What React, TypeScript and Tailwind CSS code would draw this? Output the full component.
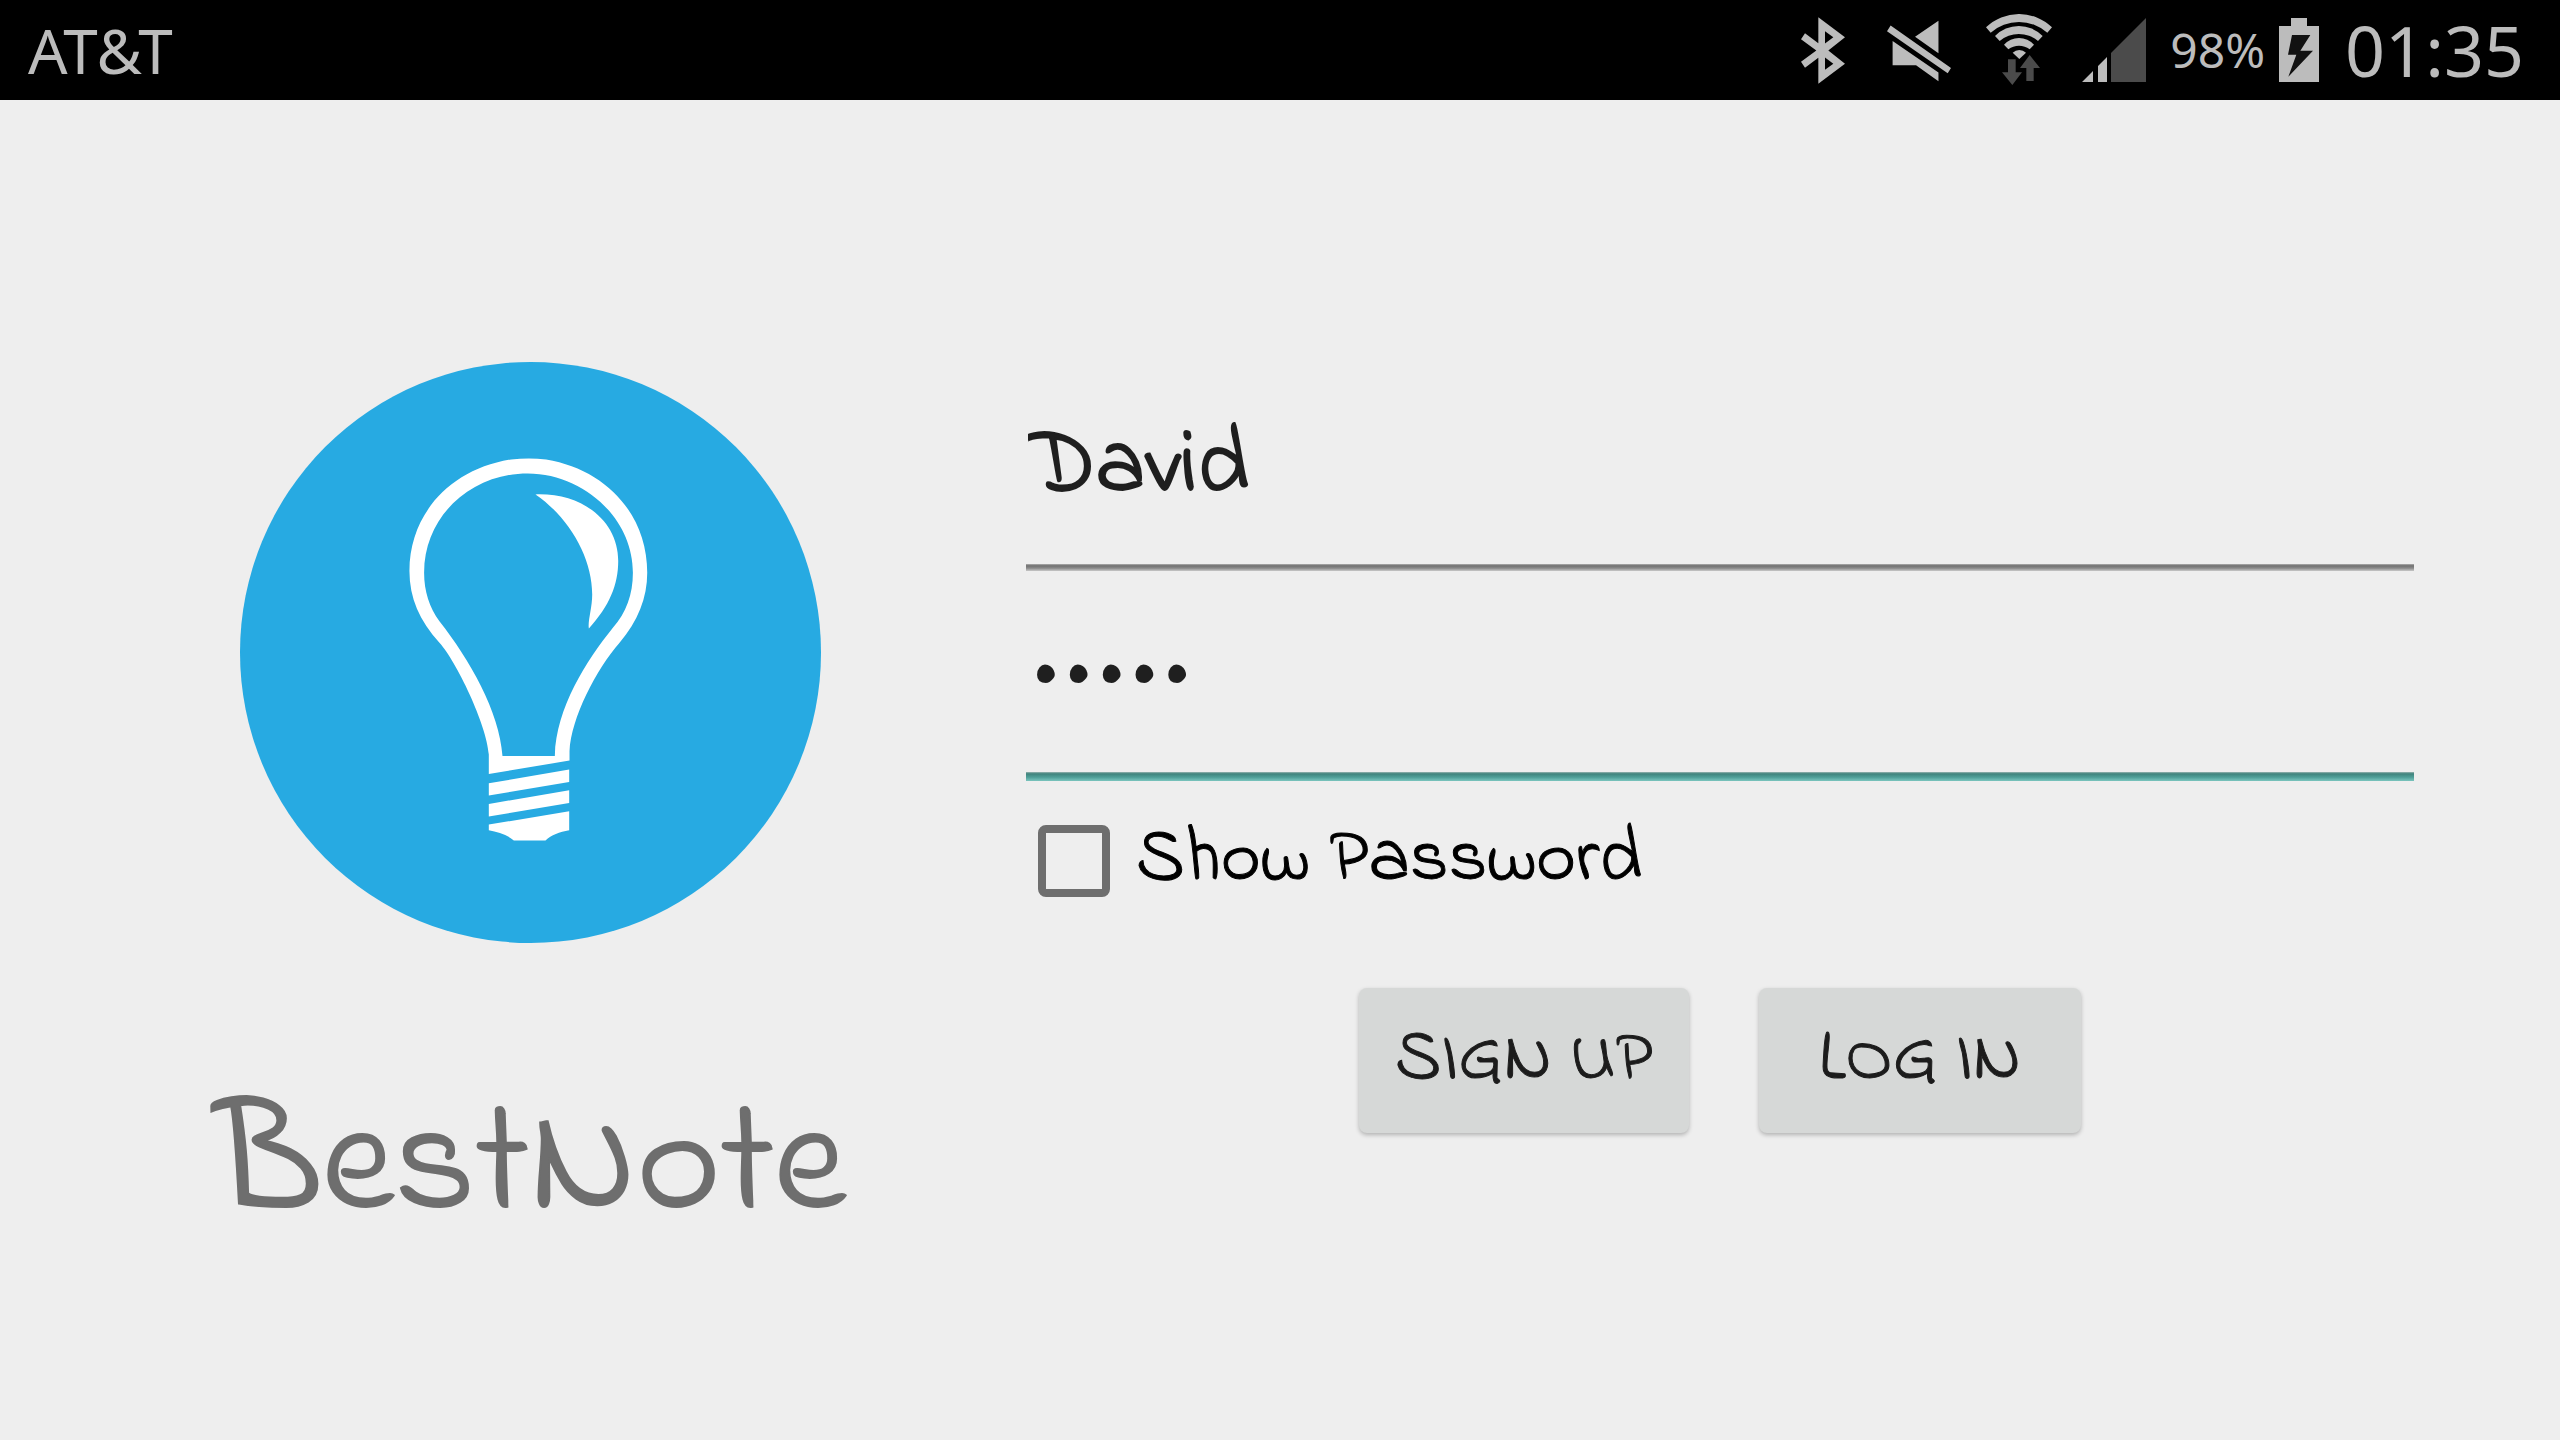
import React from "react";

const hand = "font-['Indie_Flower',Lato,sans-serif]";

function BluetoothIcon() {
  return (
    <svg viewBox="90 50 132 200" className="h-[67px] w-11 fill-current" role="img" aria-label="Bluetooth">
      <path
        fillRule="evenodd"
        d="M142 50 222 110 172 150 222 190 142 250V172L102 202 90 184 136 150 90 116 102 98 142 128ZM162 92V129L187 110ZM162 171V208L187 190Z"
      />
    </svg>
  );
}

function MuteIcon() {
  return (
    <svg viewBox="347 50 194 200" className="h-[67px] w-16 fill-current" role="img" aria-label="Muted">
      <path d="M358 74 541 203 531 219 347 92ZM503 60V158L432 108ZM364 121 503 217V243L435 195H364Z" />
    </svg>
  );
}

function WifiIcon() {
  return (
    <svg viewBox="645 42 198 216" className="h-[72px] w-[66px] fill-current" role="img" aria-label="Wi-Fi">
      <path d="M645 82A142.5 142.5 0 0 1 843 82L829 98A129 129 0 0 0 659 98Z" />
      <path d="M672 108A100 100 0 0 1 815 108L801 123A89 89 0 0 0 686 123Z" />
      <path d="M699 134A60 60 0 0 1 789 134L776 148A52 52 0 0 0 712 148Z" />
      <path d="M725 158A29 29 0 0 1 765 158L745 177Z" />
      <g fill="#4b4b4b">
        <path d="M711 178H734V217H753L724 255 693 217H711Z" />
        <path d="M776 165 807 204H788V243H766V204H747Z" />
      </g>
    </svg>
  );
}

function SignalIcon() {
  return (
    <svg viewBox="933 51 192 198" className="h-[66px] w-16 fill-current" role="img" aria-label="Signal">
      <path d="M933 246 966 213V246ZM981 198 1008 171V246H981Z" />
      <path fill="#4b4b4b" d="M1020 159 1125 54V246H1020Z" />
    </svg>
  );
}

function BatteryIcon() {
  return (
    <svg viewBox="357 51 120 192" className="h-16 w-10 fill-current" role="img" aria-label="Charging">
      <path d="M393 51H441V75H477V243H357V75H393Z" />
      <path fill="#111111" d="M396 102H451L421 149H459L385 227 409 161H384Z" />
    </svg>
  );
}

function BulbLogo() {
  return (
    <svg viewBox="-418 -207 1742 1742" className="h-auto w-[581px]" role="img" aria-label="Light bulb">
      <circle cx="453" cy="664" r="871" fill="#27aae2" />
      <g fill="#ffffff">
        <path
          fillRule="evenodd"
          d="M328 1028V970C322 880 230 690 180 635C120 570 90 500 90 420C90 250 210 115 395 85Q448 80 500 85C680 115 803 250 803 425C803 500 775 570 720 635C650 715 575 860 570 960V988ZM369 974H526C530 830 620 690 700 590C740 545 760 490 760 425C760 260 610 127 445 127C280 127 134 250 134 425C134 480 150 530 180 570C270 685 360 840 369 974Z"
        />
        <path d="M468 190C610 185 716 270 716 390C716 460 690 525 628 592C624 570 638 530 638 490C638 380 570 260 468 190Z" />
        <path d="M328 1056 569 1015V1052L328 1093Z" />
        <path d="M328 1118 569 1077V1115L328 1156Z" />
        <path d="M328 1180 569 1140V1197C540 1203 515 1210 498 1228H403C385 1210 355 1203 328 1197Z" />
      </g>
    </svg>
  );
}

function StatusBar() {
  return (
    <header className="flex h-[100px] items-center justify-between bg-black pr-9 pl-7 font-['Noto_Sans',sans-serif] text-[#bcbcbc]">
      <span className="text-[62px]">AT&amp;T</span>
      <div className="flex items-center">
        <BluetoothIcon />
        <span className="ml-[42px] flex">
          <MuteIcon />
        </span>
        <span className="ml-[35px] flex">
          <WifiIcon />
        </span>
        <span className="ml-[30px] flex">
          <SignalIcon />
        </span>
        <span className="ml-6 text-[48px]">98%</span>
        <span className="ml-[14px] flex">
          <BatteryIcon />
        </span>
        <span className="ml-[26px] text-[70px]">01:35</span>
      </div>
    </header>
  );
}

const field =
  "block h-[164px] w-full bg-transparent bg-bottom bg-no-repeat pl-0.5 text-[#1f1f1f] outline-none";
const button =
  "h-[145px] rounded-lg bg-[#d6d8d7] text-[72px] text-[#1c1c1c] shadow-[0_2px_4px_rgba(0,0,0,0.25)] [-webkit-text-stroke:1px]";

export default function App() {
  return (
    <div className={`flex min-h-screen flex-col bg-[#eeeeee] ${hand}`}>
      <StatusBar />
      <main className="grid flex-1 grid-cols-[2fr_3fr] items-center">
        <section className="flex flex-col items-center gap-[136px] pt-20 pl-9">
          <BulbLogo />
          <h1 className="text-[160px] leading-[180px] text-[#6e6e6e] [-webkit-text-stroke:2px]">BestNote</h1>
        </section>
        <form className="mr-[146px] ml-0.5" onSubmit={(e) => e.preventDefault()}>
          <input
            type="text"
            aria-label="Username"
            defaultValue="David"
            className={`${field} bg-[linear-gradient(#b0b0b0,#707070_25%,#8a8a8a_60%,#c8c8c8)] bg-[length:100%_7px] pb-[42px] text-[92px] [-webkit-text-stroke:2px]`}
          />
          <input
            type="password"
            aria-label="Password"
            defaultValue="david"
            className={`${field} mt-[46px] bg-[linear-gradient(#9ab5b2,#3f837c_20%,#50a099_60%,#7bc5be)] bg-[length:100%_9px] pb-[46px] text-[96px]`}
          />
          <label className="mt-11 flex h-[72px] w-fit items-center gap-[26px] pl-3 text-[76px] text-black [-webkit-text-stroke:1px]">
            <input
              type="checkbox"
              className="size-[72px] shrink-0 appearance-none rounded-lg border-8 border-[#6e6e6e] checked:bg-[#6e6e6e]"
            />
            Show Password
          </label>
          <div className="mt-[91px] flex justify-center gap-[70px]">
            <button type="button" className={`${button} w-[330px]`}>
              SIGN UP
            </button>
            <button type="submit" className={`${button} w-[322px]`}>
              LOG IN
            </button>
          </div>
        </form>
      </main>
    </div>
  );
}
